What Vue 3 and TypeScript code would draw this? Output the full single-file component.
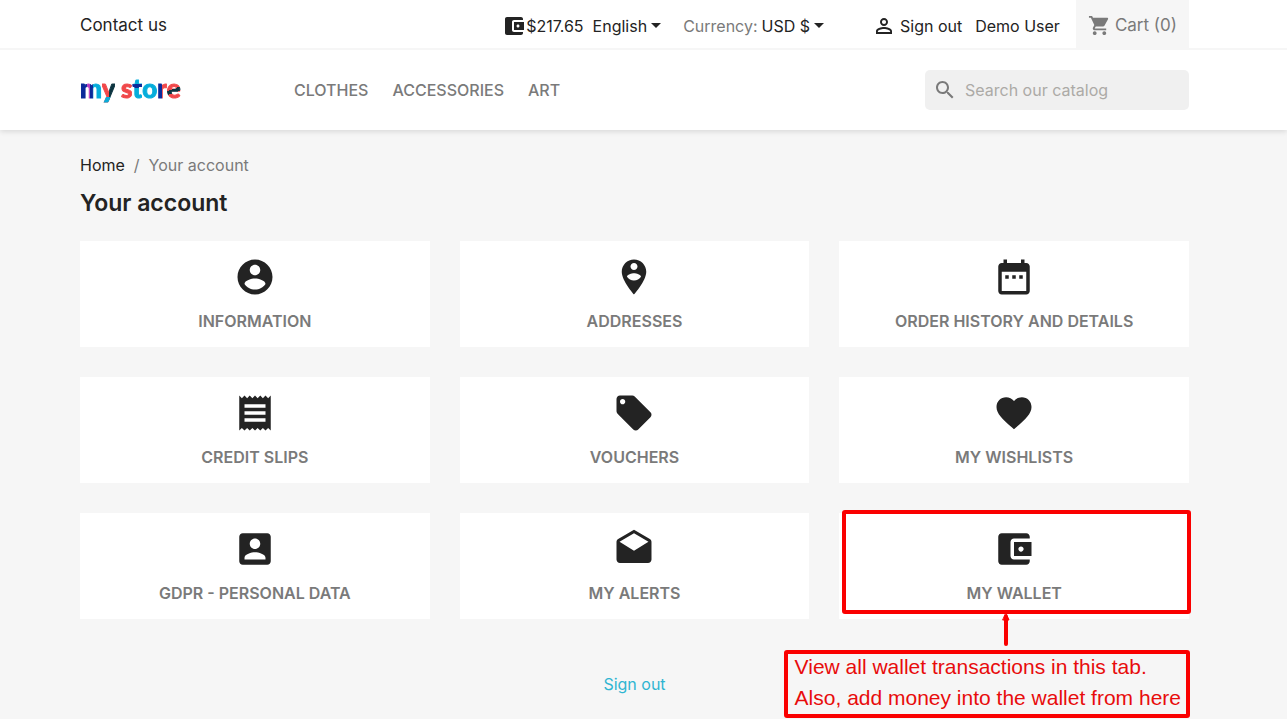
<script setup lang="ts">
interface Tile {
  label: string
  icon: string
  highlighted?: boolean
}

interface LogoLetter {
  char: string
  tone: string
}

const walletIcon =
  'M21 18v1c0 1.1-.9 2-2 2H5c-1.11 0-2-.9-2-2V5c0-1.1.89-2 2-2h14c1.1 0 2 .9 2 2v1h-9c-1.11 0-2 .9-2 2v8c0 1.1.89 2 2 2h9zm-9-2h10V8H12v8zm4-2.5c-.83 0-1.5-.67-1.5-1.5s.67-1.5 1.5-1.5 1.5.67 1.5 1.5-.67 1.5-1.5 1.5z'

const logo: LogoLetter[] = [
  { char: 'm', tone: 'navy-cyan' },
  { char: 'y', tone: 'red-dark' },
  { char: ' ', tone: 'red' },
  { char: 's', tone: 'red' },
  { char: 't', tone: 'cyan-navy' },
  { char: 'o', tone: 'cyan' },
  { char: 'r', tone: 'navy-red' },
  { char: 'e', tone: 'red-stripe' },
]

const categories: string[] = ['Clothes', 'Accessories', 'Art']

const tiles: Tile[] = [
  {
    label: 'Information',
    icon: 'M12 2C6.48 2 2 6.48 2 12s4.48 10 10 10 10-4.48 10-10S17.52 2 12 2zm0 3c1.66 0 3 1.34 3 3s-1.34 3-3 3-3-1.34-3-3 1.34-3 3-3zm0 14.2c-2.5 0-4.71-1.28-6-3.22.03-1.99 4-3.08 6-3.08 1.99 0 5.97 1.09 6 3.08-1.29 1.94-3.5 3.22-6 3.22z',
  },
  {
    label: 'Addresses',
    icon: 'M12 2C8.14 2 5 5.14 5 9c0 5.25 7 13 7 13s7-7.75 7-13c0-3.86-3.14-7-7-7zm0 2c1.1 0 2 .9 2 2 0 1.11-.9 2-2 2s-2-.89-2-2c0-1.1.9-2 2-2zm0 10c-1.67 0-3.14-.85-4-2.15.02-1.32 2.67-2.05 4-2.05s3.98.73 4 2.05c-.86 1.3-2.33 2.15-4 2.15z',
  },
  {
    label: 'Order history and details',
    icon: 'M9 11H7v2h2v-2zm4 0h-2v2h2v-2zm4 0h-2v2h2v-2zm2-7h-1V2h-2v2H8V2H6v2H5c-1.11 0-1.99.9-1.99 2L3 20c0 1.1.89 2 2 2h14c1.1 0 2-.9 2-2V6c0-1.1-.9-2-2-2zm0 16H5V9h14v11z',
  },
  {
    label: 'Credit slips',
    icon: 'M18 17H6v-2h12v2zm0-4H6v-2h12v2zm0-4H6V7h12v2zM3 22l1.5-1.5L6 22l1.5-1.5L9 22l1.5-1.5L12 22l1.5-1.5L15 22l1.5-1.5L18 22l1.5-1.5L21 22V2l-1.5 1.5L18 2l-1.5 1.5L15 2l-1.5 1.5L12 2l-1.5 1.5L9 2 7.5 3.5 6 2 4.5 3.5 3 2v20z',
  },
  {
    label: 'Vouchers',
    icon: 'M21.41 11.58l-9-9C12.05 2.22 11.55 2 11 2H4c-1.1 0-2 .9-2 2v7c0 .55.22 1.05.59 1.42l9 9c.36.36.86.58 1.41.58.55 0 1.05-.22 1.41-.59l7-7c.37-.36.59-.86.59-1.41 0-.55-.23-1.06-.59-1.42zM5.5 7C4.67 7 4 6.33 4 5.5S4.67 4 5.5 4 7 4.67 7 5.5 6.33 7 5.5 7z',
  },
  {
    label: 'My wishlists',
    icon: 'M12 21.35l-1.45-1.32C5.4 15.36 2 12.28 2 8.5 2 5.42 4.42 3 7.5 3c1.74 0 3.41.81 4.5 2.09C13.09 3.81 14.76 3 16.5 3 19.58 3 22 5.42 22 8.5c0 3.78-3.4 6.86-8.55 11.54L12 21.35z',
  },
  {
    label: 'GDPR - Personal data',
    icon: 'M3 5v14c0 1.1.89 2 2 2h14c1.1 0 2-.9 2-2V5c0-1.1-.9-2-2-2H5c-1.11 0-2 .9-2 2zm12 4c0 1.66-1.34 3-3 3s-3-1.34-3-3 1.34-3 3-3 3 1.34 3 3zm-9 8c0-2 4-3.1 6-3.1s6 1.1 6 3.1v1H6v-1z',
  },
  {
    label: 'My alerts',
    icon: 'M21.99 8c0-.72-.37-1.35-.94-1.7L12 1 2.95 6.3C2.38 6.65 2 7.28 2 8v10c0 1.1.9 2 2 2h16c1.1 0 2-.9 2-2l-.01-10zM12 13L3.74 7.84 12 3l8.26 4.84L12 13z',
  },
  { label: 'My wallet', icon: walletIcon, highlighted: true },
]
</script>

<template>
  <div class="page">
    <header class="header">
      <nav class="topbar" aria-label="Account">
        <div class="container topbar-row">
          <a class="contact" href="#">Contact us</a>
          <div class="tools">
            <a class="balance" href="#">
              <svg class="icon-sm" viewBox="2 2 20 20" aria-hidden="true"><path :d="walletIcon" /></svg>
              <span>$217.65</span>
            </a>
            <button class="picker language" type="button">English<i class="caret"></i></button>
            <div class="currency">
              <span class="muted">Currency:</span>
              <button class="picker" type="button" aria-label="Currency">USD $<i class="caret"></i></button>
            </div>
            <a class="signout" href="#">
              <svg class="icon-user" viewBox="0 0 24 24" aria-hidden="true">
                <path d="M12 5.9a2.1 2.1 0 1 1 0 4.2 2.1 2.1 0 0 1 0-4.2m0 9c2.97 0 6.1 1.46 6.1 2.1v1.1H5.9V17c0-.64 3.13-2.1 6.1-2.1M12 4C9.79 4 8 5.79 8 8s1.79 4 4 4 4-1.79 4-4-1.79-4-4-4zm0 9c-2.67 0-8 1.34-8 4v3h16v-3c0-2.66-5.33-4-8-4z" />
              </svg>
              <span>Sign out</span>
            </a>
            <a class="user" href="#">Demo User</a>
            <a class="cart" href="#">
              <svg class="icon-cart" viewBox="0 0 24 24" aria-hidden="true">
                <path d="M7 18c-1.1 0-1.99.9-1.99 2S5.900 22 7 22s2-.9 2-2-.9-2-2-2zM1 2v2h2l3.600 7.590-1.350 2.450c-.16.28-.25.61-.25.96 0 1.100.9 2 2 2h12v-2H7.420c-.14 0-.25-.11-.25-.25l.03-.12.9-1.630h7.450c.75 0 1.410-.41 1.750-1.030l3.580-6.490c.08-.14.12-.31.12-.48 0-.55-.45-1-1-1H5.210l-.94-2H1zm16 16c-1.100 0-1.990.9-1.990 2s.89 2 1.990 2 2-.9 2-2-.9-2-2-2z" />
              </svg>
              <span>Cart (0)</span>
            </a>
          </div>
        </div>
      </nav>
      <div class="container brandbar">
        <a class="logo" href="#" aria-label="my store"><span v-for="(l, i) in logo" :key="i" :class="l.tone">{{ l.char }}</span></a>
        <nav class="menu" aria-label="Categories">
          <a v-for="c in categories" :key="c" href="#">{{ c }}</a>
        </nav>
        <form class="search" @submit.prevent>
          <svg class="icon-search" viewBox="0 0 24 24" aria-hidden="true">
            <path d="M15.5 14h-.79l-.28-.27C15.410 12.590 16 11.110 16 9.500 16 5.910 13.090 3 9.500 3S3 5.910 3 9.500 5.910 16 9.500 16c1.610 0 3.090-.59 4.230-1.570l.27.28v.79l5 4.990L20.490 19l-4.990-5zm-6 0C7.010 14 5 11.990 5 9.500S7.010 5 9.500 5 14 7.010 14 9.500 11.990 14 9.500 14z" />
          </svg>
          <input type="search" placeholder="Search our catalog" aria-label="Search our catalog" />
        </form>
      </div>
    </header>

    <main class="main">
      <div class="container">
        <nav class="crumbs" aria-label="Breadcrumb">
          <a href="#">Home</a><span>/</span><span>Your account</span>
        </nav>
        <h1>Your account</h1>
        <div class="tiles">
          <div v-for="t in tiles" :key="t.label" class="tile">
            <a href="#">
              <svg viewBox="0 0 24 24" aria-hidden="true"><path :d="t.icon" /></svg>
              <span>{{ t.label }}</span>
            </a>
            <template v-if="t.highlighted">
              <div class="frame"></div>
              <svg class="arrow" viewBox="0 0 8 34" aria-hidden="true">
                <path d="M4 4V31" />
                <path class="head" d="M4 0L7 7H1z" />
              </svg>
              <p class="note">
                <span>View all wallet transactions in this tab.</span>
                <span>Also, add money into the wallet from here</span>
              </p>
            </template>
          </div>
        </div>
        <div class="bottom"><a href="#">Sign out</a></div>
      </div>
    </main>
  </div>
</template>

<style>
body {
  margin: 0;
  background: #fff;
}
</style>

<style scoped>
.page {
  color: #232323;
  font: 400 16px/24px Inter, 'Noto Sans', sans-serif;
}
a {
  color: inherit;
  text-decoration: none;
}
svg {
  flex: none;
  fill: currentColor;
}
.container {
  box-sizing: border-box;
  max-width: 1127px;
  margin: 0 auto;
  padding-right: 18px;
}
.header {
  position: relative;
  background: #fff;
  box-shadow: 0 2px 5px rgba(0, 0, 0, 0.11);
}
.topbar {
  border-bottom: 2px solid #f6f6f6;
}
.topbar-row,
.tools,
.balance,
.currency,
.signout,
.cart,
.brandbar,
.menu,
.search,
.picker {
  display: flex;
  align-items: center;
}
.topbar-row {
  justify-content: space-between;
  height: 48px;
}
.contact {
  padding-top: 2px;
  font-size: 17px;
}
.balance,
.language,
.currency,
.signout,
.user {
  padding-top: 3px;
}
.tools {
  height: 48px;
}
.icon-sm {
  width: 20px;
  height: 20px;
  margin-right: 2px;
}
.picker {
  padding-inline: 0;
  padding-bottom: 0;
  border: 0;
  background: none;
  color: inherit;
  font: inherit;
  cursor: pointer;
}
.currency .picker {
  padding-top: 0;
}
.language {
  margin: 0 22px 0 9px;
}
.caret {
  margin-left: 4px;
  border: 5px solid transparent;
  border-top-color: currentColor;
  border-bottom: 0;
}
.currency {
  gap: 4px;
  margin-right: 48px;
}
.muted {
  color: #7a7a7a;
}
.signout {
  gap: 4px;
}
.icon-user {
  width: 24px;
  height: 24px;
}
.user {
  margin: 0 16px 0 13px;
}
.cart {
  box-sizing: border-box;
  gap: 4px;
  height: 48px;
  padding: 2px 12px 0;
  background: #f6f6f6;
  color: #7a7a7a;
  font-size: 17px;
}
.icon-cart {
  width: 23px;
  height: 23px;
}
.brandbar {
  height: 80px;
}
.logo {
  width: 214px;
  padding-bottom: 4px;
  font: 900 26px/32px Lato, 'Open Sans', sans-serif;
  white-space: pre;
}
.logo span {
  background-clip: text;
  -webkit-background-clip: text;
  color: transparent;
  -webkit-text-stroke: 1px transparent;
}
.navy-cyan {
  background-image: linear-gradient(90deg, #0a2a9a 0 30%, #b83cc0 30% 44%, #0a2a9a 44% 58%, #05addb 58%);
}
.red-dark {
  background-image: linear-gradient(180deg, transparent 78%, #05addb 78%), linear-gradient(90deg, #f0484a 0 55%, #0c3440 55%);
}
.logo .red-dark {
  background-image: linear-gradient(180deg, transparent 0 78%, #05addb 78%), linear-gradient(90deg, #f0484a 0 55%, #0c3440 55%);
}
.red {
  background-image: linear-gradient(#f0484a, #f0484a);
}
.cyan-navy {
  background-image: linear-gradient(180deg, #05addb 0 38%, #0a2a9a 38% 50%, #05addb 50%);
}
.cyan {
  background-image: linear-gradient(#05addb, #05addb);
}
.navy-red {
  background-image: linear-gradient(90deg, #0a2a9a 0 55%, #f0484a 55%);
}
.red-stripe {
  background-image: linear-gradient(160deg, #f0484a 0 52%, #0c3440 52% 63%, #f0484a 63%);
}
.menu {
  gap: 24px;
  color: #7a7a7a;
  font-weight: 500;
  text-transform: uppercase;
}
.search {
  box-sizing: border-box;
  width: 264px;
  height: 40px;
  margin-left: auto;
  padding: 0 8px;
  gap: 8px;
  border-radius: 5px;
  background: #f0f0f0;
  color: #7a7a7a;
}
.icon-search {
  width: 24px;
  height: 24px;
}
.search input {
  flex: 1;
  min-width: 0;
  padding: 0;
  border: 0;
  outline: 0;
  background: none;
  color: #232323;
  font: inherit;
}
.search input::placeholder {
  color: #acaaa6;
  opacity: 1;
}
.main {
  padding: 23px 0;
  background: #f6f6f6;
}
.crumbs {
  display: flex;
  gap: 9px;
  color: #7a7a7a;
}
.crumbs a {
  color: #232323;
}
h1 {
  margin: 11px 0 23px;
  font-size: 23px;
  line-height: 30px;
  font-weight: 600;
}
.tiles {
  display: grid;
  grid-template-columns: repeat(3, 1fr);
  gap: 30px;
}
.tile {
  position: relative;
  background: #fff;
}
.tile > a {
  display: flex;
  flex-direction: column;
  align-items: center;
  gap: 11px;
  padding: 15px 0 14px;
  color: #7a7a7a;
  font-weight: 600;
  text-transform: uppercase;
}
.tile > a svg {
  width: 42px;
  height: 42px;
  color: #232323;
}
.frame {
  position: absolute;
  inset: -3px -2px 5px 3px;
  border: 4px solid #fa0000;
  border-radius: 3px;
  pointer-events: none;
}
.arrow {
  position: absolute;
  top: 100px;
  left: 163px;
  width: 8px;
  height: 34px;
  fill: none;
  stroke: #fa0000;
  stroke-width: 4;
  stroke-linecap: round;
}
.arrow .head {
  fill: #fa0000;
  stroke-width: 1;
}
.note {
  position: absolute;
  top: 137px;
  right: -1px;
  display: grid;
  gap: 5px;
  margin: 0;
  padding: 0 5px 3px 7px;
  border: 4px solid #fa0000;
  border-radius: 3px;
  color: #e80c0c;
  font: 21px/26px 'Liberation Sans', Arial, sans-serif;
  white-space: nowrap;
}
.bottom {
  margin-top: 53px;
  text-align: center;
  color: #2fb5d2;
}
</style>
